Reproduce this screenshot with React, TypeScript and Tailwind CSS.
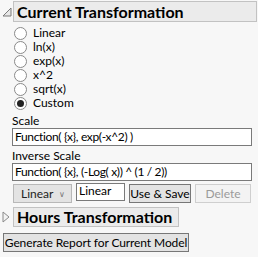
const options = ["Linear", "ln(x)", "exp(x)", "x^2", "sqrt(x)", "Custom"];

function Radio({ label, checked }: { label: string; checked?: boolean }) {
  return (
    <div className="flex items-center h-[14px] gap-[6px]">
      <span className="w-[13px] h-[13px] rounded-full border border-[#8a8a8a] bg-white flex items-center justify-center">
        {checked && <span className="w-[7px] h-[7px] rounded-full bg-[#222]" />}
      </span>
      <span className="text-[12px] leading-[14px] text-black">{label}</span>
    </div>
  );
}

function Triangle({ open }: { open?: boolean }) {
  return open ? (
    <svg width="10" height="10" viewBox="0 0 10 10" className="shrink-0">
      <path d="M9 1 L9 9 L1 9 Z" fill="#e8e8e8" stroke="#7a7a7a" strokeWidth="1" />
    </svg>
  ) : (
    <svg width="8" height="12" viewBox="0 0 8 12" className="shrink-0">
      <path d="M1 1 L7 6 L1 11 Z" fill="#f3f3f3" stroke="#8a8a8a" strokeWidth="1" />
    </svg>
  );
}

export default function App() {
  return (
    <div className="w-[258px] h-[257px] bg-[#f7f7f7] overflow-hidden pt-px whitespace-nowrap text-[12px] leading-none" style={{ fontFamily: "Lato, 'Liberation Sans', sans-serif" }}>
      <div className="flex items-center gap-[1px] pl-[2px] pr-px">
        <Triangle open />
        <div className="flex-1 h-[21px] border border-[#c2c2c2] bg-[#ebebeb] flex items-center pl-[3px]">
          <span className="text-[16px] font-bold leading-none text-black">Current Transformation</span>
        </div>
      </div>
      <div className="flex flex-col pl-[14px] mt-[4px]">
        {options.map((o) => (
          <Radio key={o} label={o} checked={o === "Custom"} />
        ))}
      </div>
      <div className="pl-[12px] pr-[6px] mt-[3px] text-black">
        <div className="h-[15px] flex items-center">Scale</div>
        <div className="h-[18px] border border-[#7a7a7a] bg-white flex items-center px-[2px] tracking-[-0.35px]">Function( {"{x}"}, exp(-x^2) )</div>
        <div className="mt-[2px] h-[15px] flex items-center">Inverse Scale</div>
        <div className="h-[18px] border border-[#7a7a7a] bg-white flex items-center px-[2px] tracking-[-0.35px]">Function( {"{x}"}, (-Log( x)) ^ (1 / 2))</div>
      </div>
      <div className="flex items-start pl-[13px] mt-[2px] gap-[4px]">
        <div className="w-[59px] h-[19px] mt-[1px] border border-[#b8b8b8] bg-[#e3e3e3] flex items-center justify-between pl-[7px] pr-[6px] text-[#222]">
          <span>Linear</span>
          <span className="text-[8px] text-[#777]">∨</span>
        </div>
        <div className="w-[49px] h-[18px] border border-[#7a7a7a] bg-white px-[2px] pt-[1px] text-black">Linear</div>
        <div className="w-[62px] h-[19px] mt-[1px] border border-[#777] bg-[#e3e3e3] flex items-center justify-center text-black">Use &amp; Save</div>
        <div className="w-[56px] h-[19px] mt-[1px] border border-[#cfcfcf] bg-[#f3f3f3] flex items-center justify-center text-[#9a9a9a]">Delete</div>
      </div>
      <div className="flex items-center gap-[3px] pl-[2px] mt-[4px]">
        <Triangle />
        <div className="w-[166px] h-[20px] border border-[#c2c2c2] bg-[#ebebeb] flex items-center pl-[3px]">
          <span className="text-[16px] font-bold leading-none text-black">Hours Transformation</span>
        </div>
      </div>
      <div className="pl-[3px] mt-[6px]">
        <div className="w-[186px] h-[19px] border border-[#777] bg-[#e3e3e3] flex items-center justify-center text-black tracking-[-0.1px]">Generate Report for Current Model</div>
      </div>
    </div>
  );
}
